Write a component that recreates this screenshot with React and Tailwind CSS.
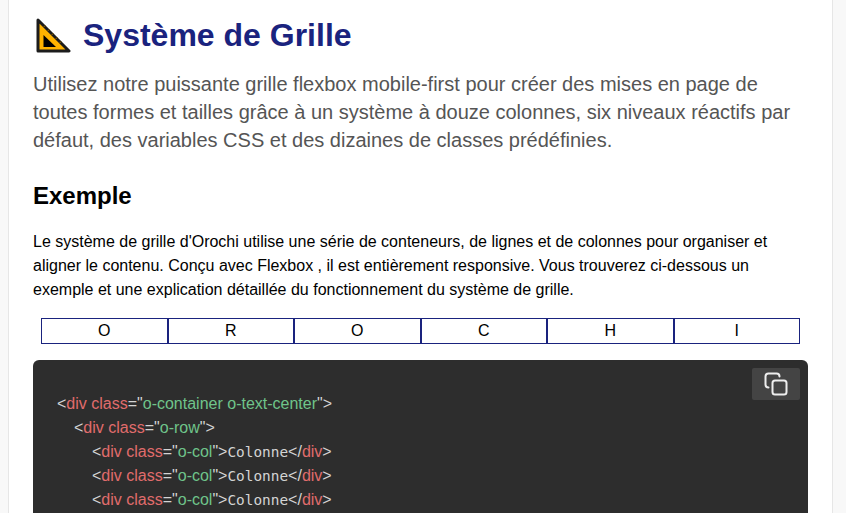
const letters = ["O", "R", "O", "C", "H", "I"];

function RulerIcon() {
  return (
    <svg width="35" height="35" viewBox="0 0 35 35" className="ml-[3px] shrink-0">
      <path d="M2 2 L33 33 L2 33 Z" fill="#ffb300" stroke="#1c1c1c" strokeWidth="3" strokeLinejoin="round" />
      <path d="M7.500 17 L20 29 L7.500 29 Z" fill="#000" />
      <path d="M7 9.500 L9.500 7.500 M11 13.500 L13.500 11.500 M15 17.500 L17.500 15.500 M19 21.500 L21.500 19.500 M23 25.500 L25.500 23.500" stroke="#8a5d00" strokeWidth="1" />
    </svg>
  );
}

function Tag({ children }) {
  return <span className="text-[#e06c6c]">{children}</span>;
}

function Str({ children }) {
  return <span className="text-[#6fc48a]">{children}</span>;
}

function ColLine() {
  return (
    <div className="pl-[35px]">
      &lt;<Tag>div class</Tag>="<Str>o-col</Str>"&gt;
      <span className="font-['DejaVu_Sans_Mono',monospace] text-[14.4px]">Colonne</span>
      &lt;/<Tag>div</Tag>&gt;
    </div>
  );
}

export default function App() {
  return (
    <div className="h-[513px] overflow-hidden bg-[#f8f8f8] font-['Liberation_Sans',sans-serif]">
      <main className="ml-[8px] h-full w-[825px] border-x border-[#e6e6e6] bg-white px-6 pt-[16px]">
        <h1 className="flex items-center gap-[12px] text-[32px] leading-[38px] font-bold text-[#1a237e]">
          <RulerIcon />
          Système de Grille
        </h1>
        <p className="mt-[16px] text-[20px] leading-[28px] text-[#555]">
          Utilisez notre puissante grille flexbox mobile-first pour créer des mises en page de toutes formes et tailles
          grâce à un système à douze colonnes, six niveaux réactifs par défaut, des variables CSS et des dizaines de
          classes prédéfinies.
        </p>
        <h2 className="mt-[27px] text-[24px] leading-[29px] font-bold text-black">Exemple</h2>
        <p className="mt-[20px] text-[16px] leading-[24px] text-black">
          Le système de grille d'Orochi utilise une série de conteneurs, de lignes et de colonnes pour organiser et
          aligner le contenu. Conçu avec Flexbox , il est entièrement responsive. Vous trouverez ci-dessous un exemple
          et une explication détaillée du fonctionnement du système de grille.
        </p>
        <div className="mx-2 mt-[16px] flex">
          {letters.map((l, i) => (
            <div
              key={i}
              className="flex h-[26px] flex-1 items-center justify-center border border-[#1a237e] text-[16px] text-black"
            >
              {l}
            </div>
          ))}
        </div>
        <div className="relative mt-[16px] h-[200px] rounded-md bg-[#2d2d2d] px-6 pt-[32px] text-[16px] leading-[24px] text-[#d4d4d4]">
          <button className="absolute top-2 right-2 flex h-8 w-12 items-center justify-center rounded-[2px] bg-[#444] text-[#eee]">
            <svg width="24" height="24" viewBox="0 0 24 24" fill="none" stroke="currentColor" strokeWidth="2" strokeLinecap="round" strokeLinejoin="round">
              <rect x="8.500" y="8.500" width="14" height="14" rx="2.500" />
              <path d="M4.500 15.500c-1.600 0-3-1.300-3-3v-8c0-1.700 1.400-3 3-3h8c1.700 0 3 1.300 3 3" />
            </svg>
          </button>
          <div>
            &lt;<Tag>div class</Tag>="<Str>o-container o-text-center</Str>"&gt;
          </div>
          <div className="pl-[17px]">
            &lt;<Tag>div class</Tag>="<Str>o-row</Str>"&gt;
          </div>
          <ColLine />
          <ColLine />
          <ColLine />
        </div>
      </main>
    </div>
  );
}
